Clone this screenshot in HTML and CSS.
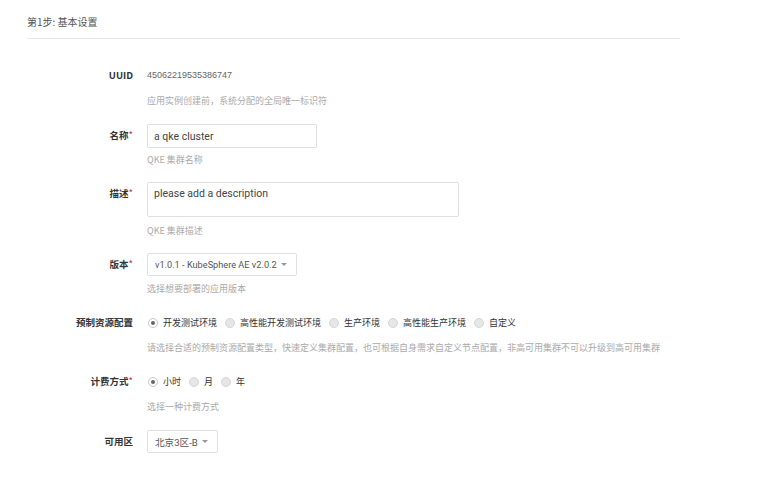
FILE: index.html
```html
<!DOCTYPE html>
<html lang="zh-CN">
<head>
    <meta charset="UTF-8">
    <title>第1步: 基本设置</title>
    <link rel="stylesheet" href="styles.css">
</head>
<body>
    <div class="page">
        <div class="step-title">第1步: 基本设置</div>

        <div class="form">
            <div class="field uuid">
                <div class="label">UUID</div>
                <div class="control">
                    <div class="static">45062219535386747</div>
                    <div class="help">应用实例创建前，系统分配的全局唯一标识符</div>
                </div>
            </div>

            <div class="field tight">
                <div class="label">名称<span class="req">*</span></div>
                <div class="control">
                    <input class="text-input name-input" type="text" value="a qke cluster">
                    <div class="help">QKE 集群名称</div>
                </div>
            </div>

            <div class="field tight">
                <div class="label">描述<span class="req">*</span></div>
                <div class="control">
                    <textarea class="text-input desc-input">please add a description</textarea>
                    <div class="help">QKE 集群描述</div>
                </div>
            </div>

            <div class="field">
                <div class="label">版本<span class="req">*</span></div>
                <div class="control">
                    <div class="select version-select">
                        <span>v1.0.1 - KubeSphere AE v2.0.2</span>
                        <span class="caret"></span>
                    </div>
                    <div class="help">选择想要部署的应用版本</div>
                </div>
            </div>

            <div class="field choice">
                <div class="label">预制资源配置</div>
                <div class="control">
                    <div class="radio-group">
                        <label class="radio-item"><span class="radio checked"></span>开发测试环境</label>
                        <label class="radio-item"><span class="radio"></span>高性能开发测试环境</label>
                        <label class="radio-item"><span class="radio"></span>生产环境</label>
                        <label class="radio-item"><span class="radio"></span>高性能生产环境</label>
                        <label class="radio-item"><span class="radio"></span>自定义</label>
                    </div>
                    <div class="help">请选择合适的预制资源配置类型，快速定义集群配置，也可根据自身需求自定义节点配置，非高可用集群不可以升级到高可用集群</div>
                </div>
            </div>

            <div class="field choice">
                <div class="label">计费方式<span class="req">*</span></div>
                <div class="control">
                    <div class="radio-group">
                        <label class="radio-item"><span class="radio checked"></span>小时</label>
                        <label class="radio-item"><span class="radio"></span>月</label>
                        <label class="radio-item"><span class="radio"></span>年</label>
                    </div>
                    <div class="help">选择一种计费方式</div>
                </div>
            </div>

            <div class="field">
                <div class="label">可用区</div>
                <div class="control">
                    <div class="select zone-select">
                        <span>北京3区-B</span>
                        <span class="caret"></span>
                    </div>
                </div>
            </div>
        </div>
    </div>
</body>
</html>
```

FILE: styles.css
```css
* {
    box-sizing: border-box;
}

body {
    margin: 0;
    background: #fff;
    color: #333;
    font-family: "Liberation Sans", Roboto, "Noto Sans CJK SC", sans-serif;
}

.page {
    padding-top: 15px;
}

.step-title {
    margin-left: 27px;
    width: 653px;
    font-size: 10px;
    line-height: 14px;
    color: #555;
    padding-bottom: 9px;
    border-bottom: 1px solid #e8e8e8;
    font-family: "Noto Sans CJK SC", sans-serif;
}

.form {
    padding-top: 25px;
}

.field {
    display: grid;
    grid-template-columns: 133px 1fr;
    column-gap: 14px;
    margin-bottom: 16px;
}

.field.tight {
    margin-bottom: 15px;
}

.label {
    text-align: right;
    font-family: "Noto Sans CJK SC", sans-serif;
    font-size: 9.5px;
    font-weight: bold;
    color: #333;
    line-height: 23px;
}

.req {
    color: #c62828;
    font-weight: normal;
}

.static {
    font-size: 9px;
    line-height: 23px;
    color: #666;
}

.help {
    margin-top: 5px;
    font-family: "Noto Sans CJK SC", sans-serif;
    font-size: 9px;
    line-height: 14px;
    color: #aaa;
    white-space: nowrap;
}

.uuid .help {
    margin-top: 7px;
}

.text-input {
    display: block;
    border: 1px solid #e0e0e0;
    border-radius: 2px;
    font-family: Roboto, "Liberation Sans", sans-serif;
    font-size: 10.5px;
    color: #444;
    padding: 0 6px;
    margin: 0;
    outline: none;
    background: #fff;
}

.name-input {
    width: 170px;
    height: 24px;
}

.desc-input {
    width: 312px;
    height: 35px;
    padding-top: 4px;
    resize: none;
    line-height: 14px;
}

.desc-input + .help {
    margin-top: 7px;
}

.select {
    display: flex;
    align-items: center;
    justify-content: space-between;
    height: 23px;
    border: 1px solid #e0e0e0;
    border-radius: 2px;
    padding: 0 9px 0 7px;
    font-family: Roboto, "Noto Sans CJK SC", sans-serif;
    font-size: 9.6px;
    color: #555;
    white-space: nowrap;
}

.select + .help {
    margin-top: 6px;
}

.version-select {
    width: 150px;
    font-size: 9.2px;
}

.zone-select {
    width: 71px;
}

.caret {
    width: 0;
    height: 0;
    border-left: 3.5px solid transparent;
    border-right: 3.5px solid transparent;
    border-top: 3.5px solid #999;
}

.choice .label {
    line-height: 21px;
}

.choice .help {
    margin-top: 8px;
}

.radio-group {
    display: flex;
    align-items: center;
    height: 21px;
    padding-left: 1px;
    gap: 8px;
}

.radio-item {
    display: flex;
    align-items: center;
    gap: 5px;
    font-family: "Noto Sans CJK SC", sans-serif;
    font-size: 9px;
    color: #333;
}

.radio {
    position: relative;
    width: 10px;
    height: 10px;
    border-radius: 50%;
    border: 1px solid #d6d6d6;
    background: #e6e6e6;
}

.radio.checked {
    background: #fff;
    border-color: #c8c8c8;
}

.radio.checked::after {
    content: "";
    position: absolute;
    left: 2px;
    top: 2px;
    width: 4px;
    height: 4px;
    border-radius: 50%;
    background: #666;
}
```
